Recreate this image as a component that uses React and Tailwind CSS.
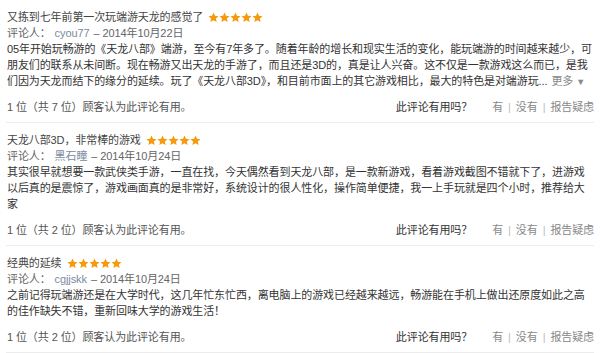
import React from "react";

const FONT = { fontFamily: '"Liberation Sans", "Noto Sans CJK SC", sans-serif' };

function Stars() {
  return (
    <span className="inline-flex items-center ml-[5px]">
      {[0, 1, 2, 3, 4].map((i) => (
        <svg key={i} width="11" height="11" viewBox="0 0 24 24" className="block">
          <path
            d="M12 1l3.2 7.3 7.8.7-5.9 5.2 1.8 7.8L12 18 5.1 22l1.8-7.8L1 9l7.8-.7z"
            fill="#f59a0c"
          />
        </svg>
      ))}
    </span>
  );
}

function Review({ title, user, date, lines, more, total }) {
  return (
    <div className="border-b border-[#ececec] pt-[9px] pb-[7px]">
      <div className="pl-[1px] h-[16px] flex items-center text-[#444]">
        <span>{title}</span>
        <Stars />
      </div>
      <div className="pl-[1px] h-[16px] flex items-center text-[#666]">
        <span>评论人：</span>
        <span className="ml-[4px] text-[#7b8aa0]">{user}</span>
        <span className="ml-[4px]">– {date}</span>
      </div>
      <div className="pl-[1px] text-[#333]">
        {lines.map((l, i) => (
          <div key={i} className="h-[16px] leading-[16px] whitespace-nowrap overflow-hidden">
            {l}
            {more && i === lines.length - 1 ? (
              <span className="text-[#888] ml-[4px]">
                更多 <span className="text-[9px] align-middle">▼</span>
              </span>
            ) : null}
          </div>
        ))}
      </div>
      <div className="pl-[1px] mt-[10px] h-[16px] flex items-center justify-between">
        <span className="text-[#555]">1 位（共 {total} 位）顾客认为此评论有用。</span>
        <span className="flex items-center">
          <span className="text-[#333]">此评论有用吗？</span>
          <span className="ml-[20px] text-[#888]">有</span>
          <span className="mx-[5px] text-[#bbb]">|</span>
          <span className="text-[#888]">没有</span>
          <span className="mx-[5px] text-[#bbb]">|</span>
          <span className="text-[#888]">报告疑虑</span>
        </span>
      </div>
    </div>
  );
}

export default function App() {
  return (
    <div
      className="w-[600px] h-[353px] bg-white overflow-hidden px-[6px] text-[11px] leading-[16px] tracking-[-0.1px]"
      style={FONT}
    >
      <Review
        title="又拣到七年前第一次玩端游天龙的感觉了"
        user="cyou77"
        date="2014年10月22日"
        total={7}
        more
        lines={[
          "05年开始玩畅游的《天龙八部》端游，至今有7年多了。随着年龄的增长和现实生活的变化，能玩端游的时间越来越少，可",
          "朋友们的联系从未间断。现在畅游又出天龙的手游了，而且还是3D的，真是让人兴奋。这不仅是一款游戏这么而已，是我",
          "们因为天龙而结下的缘分的延续。玩了《天龙八部3D》，和目前市面上的其它游戏相比，最大的特色是对端游玩...",
        ]}
      />
      <Review
        title="天龙八部3D，非常棒的游戏"
        user="黑石瞳"
        date="2014年10月24日"
        total={2}
        lines={[
          "其实很早就想要一款武侠类手游，一直在找，今天偶然看到天龙八部，是一款新游戏，看着游戏截图不错就下了，进游戏",
          "以后真的是震惊了，游戏画面真的是非常好，系统设计的很人性化，操作简单便捷，我一上手玩就是四个小时，推荐给大",
          "家",
        ]}
      />
      <Review
        title="经典的延续"
        user="cgjjskk"
        date="2014年10月24日"
        total={2}
        lines={[
          "之前记得玩端游还是在大学时代，这几年忙东忙西，离电脑上的游戏已经越来越远，畅游能在手机上做出还原度如此之高",
          "的佳作缺失不错，重新回味大学的游戏生活！",
        ]}
      />
    </div>
  );
}
